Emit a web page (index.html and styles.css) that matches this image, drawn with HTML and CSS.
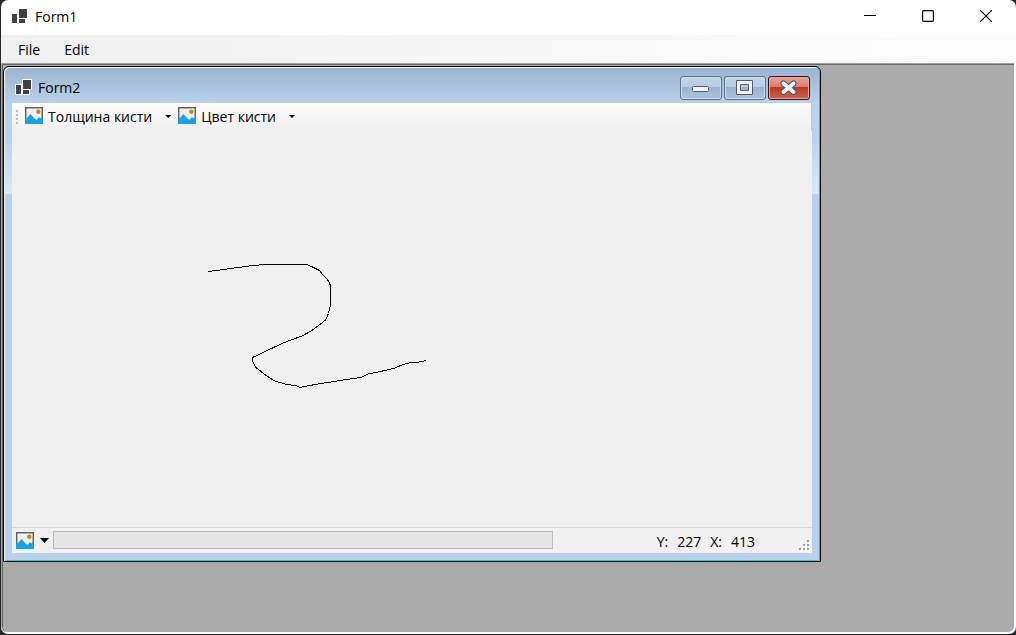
FILE: index.html
```html
<!DOCTYPE html>
<html lang="ru">
<head>
<meta charset="utf-8">
<title>Form1</title>
<link rel="stylesheet" href="styles.css">
</head>
<body>
<svg class="defs" aria-hidden="true">
  <symbol id="picture" viewBox="0 0 18 17">
    <path fill="#fff" d="M0 0h18v17H0z"/>
    <path fill="#f0f0f0" d="M2 2h14v12H2z"/>
    <path fill="#606266" d="M0 0h18v14h-1.500V1.500h-15V14H0z"/>
    <circle cx="13.300" cy="4.800" r="2.200" fill="#cc831e"/>
    <path fill="#1ba1e2" d="M0 17v-5l2-1 3.500-4 4 4.500 2 1.500 2.500-3 1.500 1.500 1-1 1.500 1.500V17z"/>
  </symbol>
  <symbol id="form" viewBox="0 0 19 18">
    <path fill="#404144" d="M9 2h8v9H9zM2 7h5v9H2zM9 12h6v4H9z"/>
  </symbol>
</svg>
<div class="window">
  <header class="titlebar">
    <svg class="form-icon"><use href="#form"/></svg>
    <h1 class="caption">Form1</h1>
    <div class="window-buttons">
      <button class="window-button" aria-label="Minimize"><svg width="12" height="12" viewBox="0 0 12 12"><path d="M0 5.500h12"/></svg></button>
      <button class="window-button" aria-label="Maximize"><svg width="12" height="12" viewBox="0 0 12 12"><rect x=".6" y=".6" width="10.800" height="10.800" rx="1.200"/></svg></button>
      <button class="window-button" aria-label="Close"><svg width="12" height="12" viewBox="0 0 12 12"><path d="M0 0l12 12M12 0L0 12"/></svg></button>
    </div>
  </header>
  <nav class="menu">
    <button class="menu-item">File</button>
    <button class="menu-item">Edit</button>
  </nav>
  <main class="workspace">
    <section class="child" aria-label="Form2">
      <header class="child-title">
        <svg class="form-icon outlined"><use href="#form"/></svg>
        <h2 class="caption">Form2</h2>
        <div class="child-buttons">
          <button class="child-button" aria-label="Minimize"><svg width="20" height="18" viewBox="0 0 20 18"><rect x="1.500" y="7.500" width="16" height="5" rx="1" fill="#f2f2f2" stroke="#575b6b"/></svg></button>
          <button class="child-button" aria-label="Maximize"><svg width="20" height="18" viewBox="0 0 20 18"><path fill="#f2f2f2" stroke="#575b6b" fill-rule="evenodd" d="M1.500 1.500h16v14h-16zM5.500 5.500v6h8v-6z"/></svg></button>
          <button class="child-button close" aria-label="Close"><svg width="20" height="18" viewBox="0 0 20 18" fill="none" stroke-linecap="round"><path stroke="#4d5468" stroke-width="6" d="M4.500 4.500l10 8.500M14.500 4.500l-10 8.500"/><path stroke="#f5f5f5" stroke-width="4" d="M4.500 4.500l10 8.500M14.500 4.500l-10 8.500"/></svg></button>
        </div>
      </header>
      <div class="form-body">
        <div class="toolbar">
          <span class="grip"></span>
          <button class="tool"><svg class="picture"><use href="#picture"/></svg><span class="tool-label">Толщина кисти</span><span class="arrow"></span></button>
          <button class="tool"><svg class="picture"><use href="#picture"/></svg><span class="tool-label">Цвет кисти</span><span class="arrow"></span></button>
        </div>
        <div class="canvas">
          <svg class="drawing" width="800" height="397" viewBox="12 130 800 397" shape-rendering="crispEdges" role="img" aria-label="Рисунок">
            <polyline fill="none" stroke="#000" points="208,271.500 216,270.500 225,269.500 230,268.500 239,267.500 253,265.500 265,264.500 306.500,264.500 312.500,267 319.500,270.500 322.500,274.500 326.500,278.500 329.500,282.500 330.500,286.500 330.500,305 328.500,313.500 325.500,320 318,326 312,330.500 302,336 283,343 252.500,357.500 252.500,361 256,367.500 263.500,373.500 273.500,380.500 286.500,384.500 296,385.500 300,387.500 315,384.500 340,380.500 361,377.500 368,374 385,370.500 395,368 403,364.500 410.500,362.500 419,362 426,360.500"/>
          </svg>
        </div>
        <footer class="status">
          <button class="status-tool" aria-label="Меню"><svg class="picture"><use href="#picture"/></svg><span class="arrow large"></span></button>
          <div class="progress" role="progressbar" aria-label="Прогресс" aria-valuenow="0"></div>
          <div class="coords"><span>Y:</span><span class="value">227</span><span>X:</span><span class="value">413</span></div>
          <svg class="sizer" width="12" height="12" viewBox="0 0 12 12"><path fill="#fff" d="M9 1h3v3H9zM9 5h3v3H9zM5 5h3v3H5zM1 9h3v3H1zM5 9h3v3H5zM9 9h3v3H9z"/><path fill="#a0a0a0" d="M8 0h2v2H8zM8 4h2v2H8zM4 4h2v2H4zM0 8h2v2H0zM4 8h2v2H4zM8 8h2v2H8z"/></svg>
        </footer>
      </div>
    </section>
  </main>
</div>
</body>
</html>
```

FILE: styles.css
```css
* { box-sizing: border-box; }
body {
  margin: 0;
  height: 100vh;
  padding: 0 0 1px 1px;
  background: #26262b;
  color: #000;
  font: 14px/20px "Open Sans", "Noto Sans", sans-serif;
  overflow: hidden;
}
button {
  border: 0;
  padding: 0;
  background: none;
  color: inherit;
  font: inherit;
}
.defs { position: absolute; width: 0; height: 0; }
.window {
  display: flex;
  flex-direction: column;
  height: 100%;
  background: #fff;
  border-radius: 7px;
  overflow: hidden;
}
.titlebar { display: flex; align-items: center; height: 35px; padding: 0 1px 0 9px; }
.form-icon { width: 19px; height: 18px; margin-bottom: 4px; }
.form-icon.outlined {
  margin-bottom: 2px;
  stroke: #fff;
  stroke-width: 2;
  paint-order: stroke;
}
.caption { margin: 0; font-size: 14px; line-height: 20px; font-weight: 400; }
.titlebar .caption { padding-left: 6px; margin-bottom: 2px; }
.window-buttons { display: flex; margin-left: auto; }
.window-button {
  display: grid;
  place-items: center;
  width: 58px;
  height: 32px;
  margin-bottom: 4px;
  fill: none;
  stroke: #000;
  stroke-width: 1.2;
}
.menu {
  display: flex;
  gap: 6px;
  height: 28px;
  padding: 1px 0 0 8px;
  background: linear-gradient(90deg, #f0f0f0, #fdfdfd);
}
.menu-item { padding: 0 9px; }
.workspace {
  position: relative;
  flex: 1;
  margin: 0 2px 2px 0;
  border: 1px solid #a0a0a0;
  border-width: 1px 0 0 1px;
  box-shadow: inset 1px 1px #696969;
  background: #ababab;
  border-radius: 0 0 6px 6px;
}
.child {
  position: absolute;
  left: 1px;
  top: 2px;
  width: 818px;
  height: 496px;
  display: flex;
  flex-direction: column;
  padding: 0 8px 8px;
  border: 1px solid #000;
  border-radius: 6px 6px 0 0;
  box-shadow: inset 1px 1px #f4f8fc, inset -1px -1px #2fc3dc;
  background: linear-gradient(#99b4d1, #b9d1ea 36px, #bad2eb 70px, #dae7f5 126px, #b9d1ea 128px);
}
.child-title { display: flex; align-items: center; height: 36px; padding: 6px 2px 0; }
.child-title .caption { padding-left: 5px; }
.child-buttons { display: flex; gap: 2px; margin: 0 0 1px auto; }
.child-button {
  display: grid;
  place-items: center;
  width: 42px;
  height: 24px;
  border: 1px solid #5e7391;
  border-radius: 3px;
  box-shadow: inset 0 0 0 1px #c9dced;
  background: linear-gradient(#c3d5e8, #b5cce3 45%, #98b2cf 46%, #a9c6e2);
}
.child-button.close {
  border-color: #421018;
  box-shadow: inset 0 0 0 1px #e5a79c;
  background: linear-gradient(#e7a69b, #d77c6f 45%, #b73a25 46%, #c86450);
}
.form-body { display: flex; flex: 1; flex-direction: column; background: #f0f0f0; }
.toolbar {
  display: flex;
  align-items: center;
  height: 27px;
  padding-left: 4px;
  border-right: 1px solid #c4c4c4;
  background: linear-gradient(#fdfdfd, #f0f0f0);
}
.grip {
  width: 2px;
  height: 14px;
  margin-right: 7px;
  background: repeating-linear-gradient(#bfbfbf 0 2px, transparent 2px 4px);
}
.tool { display: flex; align-items: center; padding-right: 7px; }
.tool-label { padding: 0 13px 0 5px; }
.picture { width: 18px; height: 17px; margin-bottom: 2px; }
.arrow {
  width: 6px;
  height: 3px;
  background: #000;
  clip-path: polygon(0 0, 100% 0, 50% 100%);
}
.arrow.large { width: 9px; height: 5px; }
.canvas { flex: 1; min-height: 0; overflow: hidden; }
.drawing { display: block; }
.status {
  display: flex;
  align-items: center;
  height: 26px;
  padding: 0 1px 0 4px;
  border-top: 1px solid #d7d7d7;
}
.status-tool { display: flex; align-items: center; gap: 6px; margin-top: 2px; }
.status-tool .arrow { margin-bottom: 2px; }
.progress {
  width: 500px;
  height: 18px;
  margin: 0 0 1px 4px;
  border: 1px solid #bcbcbc;
  background: #e6e6e6;
}
.coords { display: flex; gap: 9px; margin: 2px 44px 0 auto; }
.sizer { align-self: flex-end; margin-bottom: 1px; }
```
